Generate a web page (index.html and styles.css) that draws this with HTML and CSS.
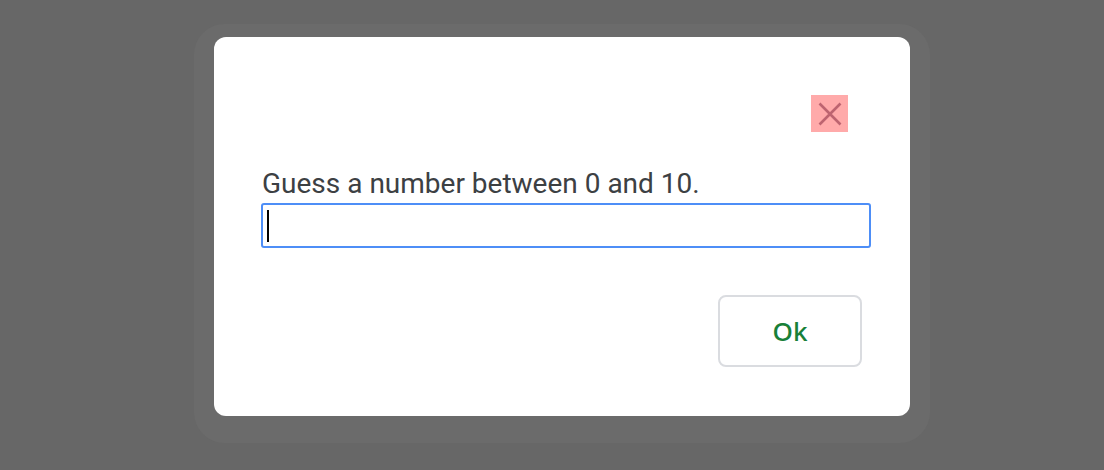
FILE: index.html
```html
<!DOCTYPE html>
<html>
<head>
<meta charset="utf-8">
<link rel="stylesheet" href="styles.css">
</head>
<body>
<div class="stage">
  <div class="dialog">
    <div class="top">
      <button class="close" aria-label="Close">
        <svg width="24" height="24" viewBox="0 0 24 24"><path d="M1.5 1.5 L22.5 22.5 M22.5 1.5 L1.5 22.5" stroke="#bd6470" stroke-width="2.6" fill="none"/></svg>
      </button>
    </div>
    <div class="body">
      <label class="prompt">Guess a number between 0 and 10.</label>
      <div class="input"><span class="caret"></span></div>
    </div>
    <div class="actions">
      <button class="ok">Ok</button>
    </div>
  </div>
</div>
</body>
</html>
```

FILE: styles.css
```css
html, body {
  margin: 0;
  padding: 0;
  background: #676767;
  width: 1104px;
  height: 470px;
  overflow: hidden;
}
.stage {
  padding-top: 37px;
  display: flex;
  justify-content: center;
}
.dialog {
  margin-left: 20px;
  width: 696px;
  height: 379px;
  background: #fff;
  border-radius: 12px;
  box-shadow: 0 7px 0 20px #6b6b6b;
  box-sizing: border-box;
  padding: 58px 39px 0 47px;
  font-family: Roboto, "Liberation Sans", sans-serif;
}
.top {
  display: flex;
  justify-content: flex-end;
  padding-right: 23px;
}
.close {
  width: 37px;
  height: 37px;
  background: #ffaaaa;
  border: 0;
  padding: 0;
  display: flex;
  align-items: center;
  justify-content: center;
}
.body {
  margin-top: 33px;
  display: flex;
  flex-direction: column;
}
.prompt {
  font-size: 28px;
  line-height: 38px;
  color: #3c4043;
  margin-left: 1px;
}
.input {
  height: 45px;
  box-sizing: border-box;
  border: 2px solid #4d8ef7;
  border-radius: 3px;
  display: flex;
  align-items: center;
  padding-left: 4px;
}
.caret {
  width: 2px;
  height: 32px;
  background: #000;
}
.actions {
  display: flex;
  justify-content: flex-end;
  margin-top: 47px;
  padding-right: 9px;
}
.ok {
  width: 144px;
  height: 72px;
  border: 2px solid #dadce0;
  border-radius: 8px;
  background: #fff;
  color: #188038;
  font-family: "Noto Sans", Roboto, sans-serif;
  font-weight: 500;
  font-size: 26px;
}
```
